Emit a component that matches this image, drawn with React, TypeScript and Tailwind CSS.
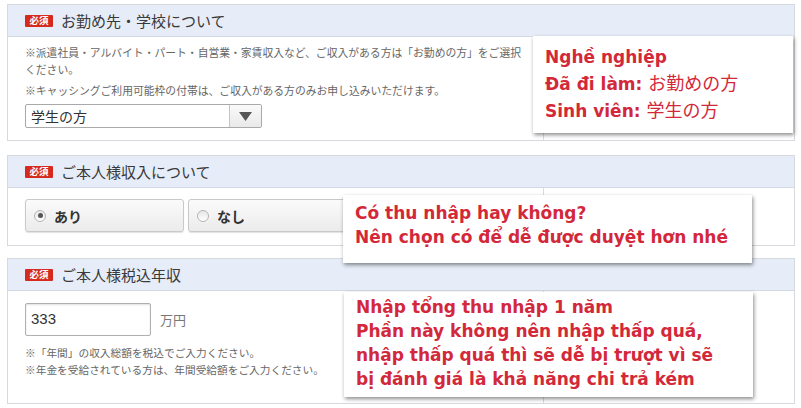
import type { ReactNode } from "react";

// Red "必須" tag shown before each section title
function RequiredBadge() {
  return (
    <span className="flex h-[12px] w-[28px] items-center justify-center rounded-[1px] bg-[#d42b1e] text-[9.5px] font-bold leading-none text-white">
      必須
    </span>
  );
}

type SectionProps = {
  title: string;
  children: ReactNode;
  className?: string;
};

// One form section: blue header bar + two-column body
function Section({ title, children, className = "" }: SectionProps) {
  return (
    <div className={`w-[788px] border border-[#d6d9de] bg-white ${className}`}>
      <div className="flex h-[32px] items-center gap-[8px] border-b border-[#d3d9e3] bg-[#e7edf8] pl-[17px]">
        <RequiredBadge />
        <span className="text-[15px] leading-none text-[#3a3a3a]">{title}</span>
      </div>
      <div className="grid grid-cols-[535px_1fr]">
        <div>{children}</div>
        <div className="border-l border-[#dcdcdc]" />
      </div>
    </div>
  );
}

function RadioButton({ label, checked = false }: { label: string; checked?: boolean }) {
  return (
    <div className="flex h-[33px] w-[159px] items-center gap-[8px] rounded-[3px] border border-[#c9c9c9] bg-gradient-to-b from-[#fbfbfb] to-[#ebebeb] pl-[8px] shadow-[0_1px_1px_rgba(0,0,0,0.12)]">
      <span className="flex h-[12px] w-[12px] items-center justify-center rounded-full border border-[#b5b5b5] bg-gradient-to-b from-[#e6e6e6] to-white">
        {checked && <span className="h-[5px] w-[5px] rounded-full bg-[#555]" />}
      </span>
      <span className="text-[14px] font-bold leading-none text-[#333]">{label}</span>
    </div>
  );
}

// Red callout laid over the form
function Note({ className, children }: { className: string; children: ReactNode }) {
  return (
    <div
      className={`absolute bg-white pl-[12px] font-['DejaVu_Sans','Noto_Sans_CJK_JP',sans-serif] text-[17px] font-bold text-[#d3283a] shadow-[1px_2px_4px_rgba(0,0,0,0.45)] ${className}`}
    >
      {children}
    </div>
  );
}

function Jp({ children }: { children: ReactNode }) {
  return (
    <span className="font-['Noto_Sans_CJK_JP',sans-serif] text-[18px] font-normal">{children}</span>
  );
}

export default function App() {
  return (
    <div className="relative h-[408px] w-[801px] overflow-hidden bg-white pl-[7px] pt-[4px] font-['Noto_Sans_CJK_JP',sans-serif]">
      <Section title="お勤め先・学校について">
        <div className="pb-[12px] pl-[17px] pt-[7px] text-[10.8px] leading-[17px] text-[#666]">
          <p className="whitespace-nowrap">
            ※派遣社員・アルバイト・パート・自営業・家賃収入など、ご収入がある方は「お勤めの方」をご選択
          </p>
          <p>ください。</p>
          <p className="mt-[4px] whitespace-nowrap">
            ※キャッシングご利用可能枠の付帯は、ご収入がある方のみお申し込みいただけます。
          </p>
          <div className="mt-[5px] flex h-[24px] w-[237px] overflow-hidden rounded-[2px] border border-[#a9a9a9] bg-white">
            <div className="flex flex-1 items-center pl-[5px] text-[14px] text-[#333]">学生の方</div>
            <div className="flex w-[32px] items-center justify-center border-l border-[#c4c4c4] bg-gradient-to-b from-[#fafafa] to-[#e9e9e9]">
              <svg width="13" height="9" viewBox="0 0 13 9">
                <path d="M0 0h13L6.5 9z" fill="#555" />
              </svg>
            </div>
          </div>
        </div>
      </Section>

      <Section title="ご本人様収入について" className="mt-[14px]">
        <div className="flex gap-[4px] pb-[13px] pl-[17px] pt-[11px]">
          <RadioButton label="あり" checked />
          <RadioButton label="なし" />
        </div>
      </Section>

      <Section title="ご本人様税込年収" className="mt-[12px]">
        <div className="pb-[25px] pl-[17px] pt-[12px]">
          <div className="flex items-center gap-[9px]">
            <div className="flex h-[33px] w-[126px] items-center rounded-[2px] border border-[#b0b0b0] pl-[5px] font-['Liberation_Sans',sans-serif] text-[15px] text-[#333] shadow-[inset_0_1px_2px_rgba(0,0,0,0.12)]">
              333
            </div>
            <span className="text-[13px] text-[#777]">万円</span>
          </div>
          <div className="mt-[8px] text-[10.7px] leading-[17px] text-[#666]">
            <p>※「年間」の収入総額を税込でご入力ください。</p>
            <p>※年金を受給されている方は、年間受給額をご入力ください。</p>
          </div>
        </div>
      </Section>

      <Note className="left-[533px] top-[36px] h-[97px] w-[260px] pt-[9px] leading-[25px]">
        <p>Nghề nghiệp</p>
        <p>
          Đã đi làm: <Jp>お勤めの方</Jp>
        </p>
        <p>
          Sinh viên: <Jp>学生の方</Jp>
        </p>
      </Note>

      <Note className="left-[343px] top-[195px] h-[68px] w-[409px] pt-[6px] leading-[24px]">
        <p>Có thu nhập hay không?</p>
        <p>Nên chọn có để dễ được duyệt hơn nhé</p>
      </Note>

      <Note className="left-[344px] top-[292px] h-[105px] w-[409px] pt-[3px] leading-[24px]">
        <p>Nhập tổng thu nhập 1 năm</p>
        <p>Phần này không nên nhập thấp quá,</p>
        <p>nhập thấp quá thì sẽ dễ bị trượt vì sẽ</p>
        <p>bị đánh giá là khả năng chi trả kém</p>
      </Note>
    </div>
  );
}
